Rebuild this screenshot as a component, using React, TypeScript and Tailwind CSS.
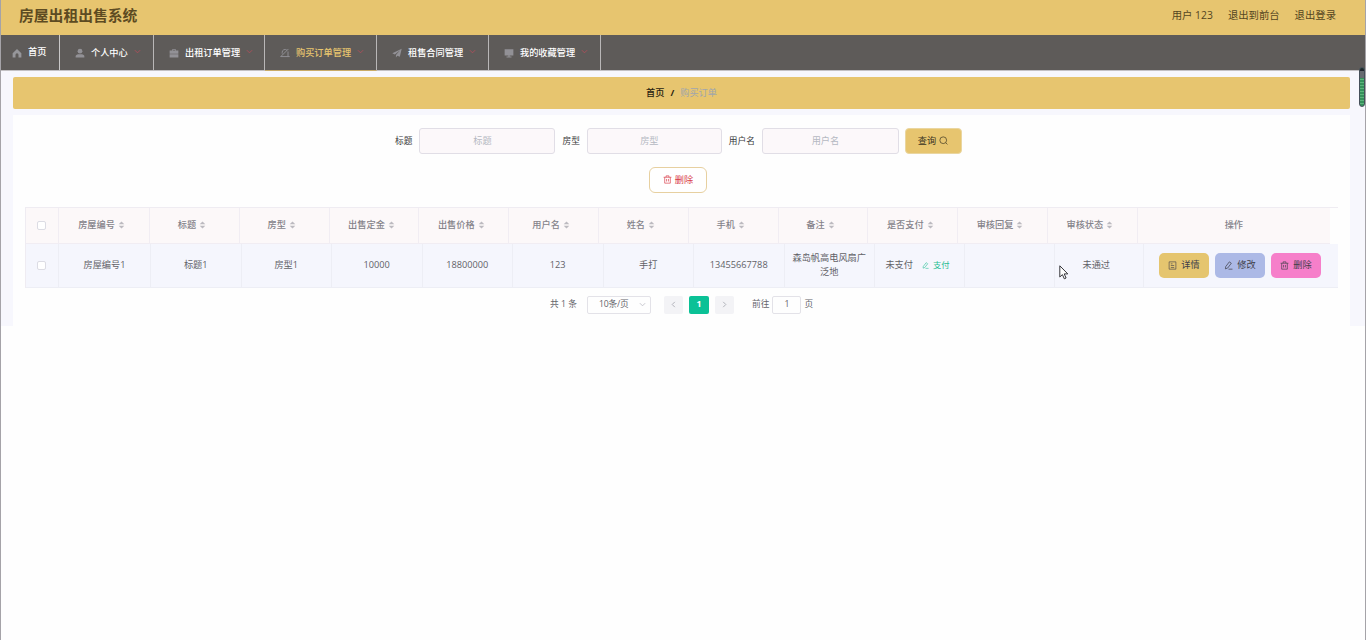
import type { ReactNode } from 'react';
import { clsx } from 'clsx';

interface IconProps {
  className?: string;
}

function HomeIcon({ className }: IconProps) {
  return (
    <svg viewBox="0 0 16 16" className={className} fill="currentColor">
      <path d="M8 1.5 1 8.2V15h4.6v-4.2a2.4 2.4 0 0 1 4.8 0V15H15V8.2z" />
    </svg>
  );
}

function UserIcon({ className }: IconProps) {
  return (
    <svg viewBox="0 0 16 16" className={className} fill="currentColor">
      <circle cx="8" cy="5" r="3.8" />
      <path d="M1 15v-1.500C1 11.500 3 10 5 10h6c2 0 4 1.500 4 3.500V15z" />
    </svg>
  );
}

function BriefcaseIcon({ className }: IconProps) {
  return (
    <svg viewBox="0 0 16 16" className={className} fill="currentColor">
      <path d="M5 4V2h6v2h4v5H1V4zm1.200 0h3.600V3.100H6.200zM1 10h14v5H1z" />
    </svg>
  );
}

function EditIcon({ className }: IconProps) {
  return (
    <svg viewBox="0 0 16 16" className={className} fill="none" stroke="currentColor" strokeWidth="1.3" strokeLinejoin="round">
      <path d="M9.500 1.500 13 4 6.500 12.500 2.500 14 3 10zM8 14.500h7" />
    </svg>
  );
}

function BellOffIcon({ className }: IconProps) {
  return (
    <svg viewBox="0 0 16 16" className={className} fill="none" stroke="currentColor" strokeWidth="1.500">
      <path d="M1 14 13.500 1.500M3.500 9V7A4.500 4.500 0 0 1 11 3.500M12.800 5.500V13.500M1 13.700h14.500" />
    </svg>
  );
}

function SendIcon({ className }: IconProps) {
  return (
    <svg viewBox="0 0 16 16" className={className} fill="currentColor">
      <path d="M15.500 1 .5 8.500 4.500 10.300 13 3.500 6.300 11v4l2.300-2.700 3.900 1.700z" />
    </svg>
  );
}

function MonitorIcon({ className }: IconProps) {
  return (
    <svg viewBox="0 0 16 16" className={className} fill="currentColor">
      <path d="M1 2h14v10H9v1.500h3V15H4v-1.500h3V12H1z" />
    </svg>
  );
}

function TrashIcon({ className }: IconProps) {
  return (
    <svg viewBox="0 0 16 16" className={className} fill="none" stroke="currentColor" strokeWidth="1.2">
      <path d="M1 4h14M5.500 4V1.500h5V4M3 4v10.500h10V4M6.300 7v4.500M9.700 7v4.500" />
    </svg>
  );
}

function DocumentIcon({ className }: IconProps) {
  return (
    <svg viewBox="0 0 16 16" className={className} fill="none" stroke="currentColor" strokeWidth="1.1">
      <path d="M2 1.500h12v13H2zM5 5h3M5 8h6M5 11.500h6" />
    </svg>
  );
}

function SearchIcon({ className }: IconProps) {
  return (
    <svg viewBox="0 0 16 16" className={className} fill="none" stroke="currentColor" strokeWidth="1.2">
      <circle cx="7.500" cy="7.500" r="6" />
      <path d="m12 12 3 3" />
    </svg>
  );
}

function Chevron({ className }: IconProps) {
  return (
    <svg viewBox="0 0 16 16" className={className} fill="none" stroke="currentColor" strokeWidth="2">
      <path d="m2 5 6 6 6-6" />
    </svg>
  );
}

function SortCaret() {
  return (
    <svg viewBox="0 0 8 10" className="ml-[3px] h-[8px] w-[7px] shrink-0 fill-[#bcbac0]">
      <path d="M4 .5 7.500 4h-7zM4 9.500.5 6h7z" />
    </svg>
  );
}

const navItems = [
  { label: '个人中心', icon: UserIcon, width: 'w-[94px]' },
  { label: '出租订单管理', icon: BriefcaseIcon, width: 'w-[111px]' },
  { label: '购买订单管理', icon: BellOffIcon, width: 'w-[112px]', active: true },
  { label: '租售合同管理', icon: SendIcon, width: 'w-[112px]' },
  { label: '我的收藏管理', icon: MonitorIcon, width: 'w-[112px]' },
];

const columns = [
  '房屋编号', '标题', '房型', '出售定金', '出售价格', '用户名',
  '姓名', '手机', '备注', '是否支付', '审核回复', '审核状态',
];

const order: ReactNode[] = [
  '房屋编号1',
  '标题1',
  '房型1',
  '10000',
  '18800000',
  '123',
  '手打',
  '13455667788',
  '森岛帆高电风扇广泛地',
  <span className="mr-[4px] flex items-center gap-[9px] whitespace-nowrap">
    未支付
    <span className="flex items-center gap-[4px] pt-px text-[8.300px] text-[#1fbd92]">
      <EditIcon className="h-[7px] w-[7px]" />
      支付
    </span>
  </span>,
  '',
  <span className="mr-[5px]">未通过</span>,
];

function Header() {
  return (
    <header className="flex h-[35px] items-center justify-between bg-[#e7c56f] pr-[29px] pl-[18px] text-[#5d4b22]">
      <h1 className="pb-[4px] text-[14.800px] font-bold">房屋出租出售系统</h1>
      <div className="flex gap-[15px] pb-[4px] text-[10.350px] text-[#54451f]">
        <span>用户 123</span>
        <span>退出到前台</span>
        <span>退出登录</span>
      </div>
    </header>
  );
}

function NavBar() {
  return (
    <nav className="flex h-[36px] border-b border-[#c3c1c4] bg-[#5e5b59] text-[9.200px] font-medium text-white">
      <a className="flex w-[59px] items-center border-r border-[#c9c8c8] pb-[2px] pl-[11px]">
        <HomeIcon className="mt-[3px] mr-[6px] h-[10px] w-[10px] text-[#96969a]" />
        首页
      </a>
      {navItems.map(({ label, icon: Icon, width, active }) => (
        <a
          key={label}
          className={clsx(
            'flex items-center border-r border-[#b9b7b7] pl-[15px]',
            width,
            active && '-mb-px border-b border-b-[#c9ab68] text-[#e7c56f]',
          )}
        >
          <Icon className="mt-px mr-[6px] h-[10px] w-[10px] shrink-0 text-[#929196]" />
          <span className="shrink-0">{label}</span>
          <Chevron className="mb-[2px] ml-[6px] h-[7px] w-[7px] shrink-0 text-[#b04f5a]" />
        </a>
      ))}
    </nav>
  );
}

function SearchField({ label, width }: { label: string; width: string }) {
  return (
    <label className="flex items-center gap-[7px]">
      <span className="pt-px text-[8.700px] text-[#38383a]">{label}</span>
      <input
        placeholder={label}
        className={clsx(
          'h-[26px] rounded-[3px] border border-[#e1dee6] bg-[#fcf8fa] pr-[12px] pb-[2px] pl-[2px] text-center text-[9.200px] placeholder:text-[#b5b8c2]',
          width,
        )}
      />
    </label>
  );
}

function ActionButton({ children, className }: { children: ReactNode; className: string }) {
  return (
    <button className={clsx('flex h-[25px] w-[50px] items-center justify-center gap-[4px] rounded-[5px] pb-px text-[#41404a]', className)}>
      {children}
    </button>
  );
}

function Checkbox({ className }: IconProps) {
  return <span className={clsx('h-[9px] w-[9px] rounded-[2px] border border-[#dcdce4] bg-white', className)} />;
}

function OrderTable() {
  return (
    <div className="mr-[12px] ml-[12px] border-t border-l border-[#efecf2] text-[9.200px]">
      <div className="mr-[8px] grid h-[36px] grid-cols-[33px_91px_repeat(11,89.800px)_1fr] bg-[#fcf8f9] text-[#85838a]">
        <div className="flex items-center justify-center border-r border-b border-[#f1edf3]">
          <Checkbox className="mr-px" />
        </div>
        {columns.map((name) => (
          <div key={name} className="flex items-center justify-center border-r border-b border-[#f1edf3] pr-[5px] pb-[2px] font-medium">
            {name}
            <SortCaret />
          </div>
        ))}
        <div className="flex items-center justify-center border-b border-[#f1edf3] pb-px font-medium">操作</div>
      </div>
      <div className="grid h-[44px] grid-cols-[33px_92px_repeat(8,90.500px)_90px_89.500px_89.500px_1fr] bg-[#f5f6fd] text-[#626268]">
        <div className="flex items-center justify-center border-r border-b border-[#edeef5]">
          <Checkbox className="mr-[2px]" />
        </div>
        {order.map((value, i) => (
          <div
            key={columns[i]}
            className="flex items-center justify-center border-r border-b border-[#edeef5] px-[8px] pb-[2px] text-center leading-[14px] whitespace-normal"
          >
            {value}
          </div>
        ))}
        <div className="flex items-center justify-center gap-[6px] border-b border-[#edeef5] pr-[2px]">
          <ActionButton className="bg-[#e5c56f]">
            <DocumentIcon className="h-[9px] w-[9px]" />
            详情
          </ActionButton>
          <ActionButton className="bg-[#acb9e6]">
            <EditIcon className="h-[9px] w-[9px]" />
            修改
          </ActionButton>
          <ActionButton className="bg-[#f67fca]">
            <TrashIcon className="h-[9px] w-[9px]" />
            删除
          </ActionButton>
        </div>
      </div>
    </div>
  );
}

function Pagination() {
  return (
    <div className="flex h-[19px] items-center pl-[537px] text-[8.700px] text-[#65656b]">
      <span className="w-[37px]">共 1 条</span>
      <div className="flex h-[18px] w-[64px] items-center justify-between rounded-[2px] border border-[#e3e2e8] pr-[4px] pl-[11px] tracking-[-0.2px]">
        10条/页
        <Chevron className="h-[7px] w-[7px] text-[#c0c0c8]" />
      </div>
      <div className="ml-[13px] flex gap-[6px]">
        <button className="flex h-[18px] w-[19px] items-center justify-center rounded-[2px] bg-[#f3f3f6]">
          <Chevron className="h-[7px] w-[7px] rotate-90 text-[#a9aab2]" />
        </button>
        <button className="h-[18px] w-[20px] rounded-[2px] bg-[#0bc196] font-bold text-white">1</button>
        <button className="flex h-[18px] w-[19px] items-center justify-center rounded-[2px] bg-[#f3f3f6]">
          <Chevron className="h-[7px] w-[7px] -rotate-90 text-[#a9aab2]" />
        </button>
      </div>
      <span className="ml-[18px]">前往</span>
      <span className="mx-[3px] flex h-[18px] w-[29px] items-center justify-center rounded-[2px] border border-[#e3e2e8]">1</span>
      <span>页</span>
    </div>
  );
}

export default function App() {
  return (
    <div className="relative h-[640px] w-[1366px] overflow-hidden border-r border-l border-[#a5a3a8] bg-[#fefefe] font-['Open_Sans','Noto_Sans_CJK_SC',sans-serif] whitespace-nowrap">
      <Header />
      <NavBar />
      <main className="h-[255px] bg-[#f7f7fd] pt-[6px] pr-[15px] pl-[12px]">
        <div className="flex h-[32px] items-center justify-center gap-[6px] rounded-[2px] bg-[#e7c56f] pb-px text-[9.200px]">
          <span className="font-medium text-[#28220f]">首页</span>
          <span className="font-bold text-[#28220f]">/</span>
          <span className="text-[#a0a6ae]">购买订单</span>
        </div>
        <section className="mt-[6px] h-[211px] bg-[#fefefe] pt-[13px]">
          <div className="flex justify-center gap-[7px] pr-[6px]">
            <SearchField label="标题" width="w-[136px]" />
            <SearchField label="房型" width="w-[135px]" />
            <SearchField label="用户名" width="w-[137px]" />
            <button className="-ml-px flex h-[26px] w-[57px] items-center justify-center gap-[3px] rounded-[4px] border border-[#ead6a0] bg-[#e7c56f] pr-px pb-px text-[9.200px] text-[#38321f]">
              查询
              <SearchIcon className="h-[9px] w-[9px]" />
            </button>
          </div>
          <div className="mt-[13px] mb-[14px] flex justify-center pr-[7px]">
            <button className="flex h-[26px] w-[58px] items-center justify-center gap-[3px] rounded-[6px] border border-[#e7d0a0] bg-white pb-px text-[9.200px] text-[#d83c48]">
              <TrashIcon className="h-[9px] w-[9px]" />
              删除
            </button>
          </div>
          <OrderTable />
          <div className="mt-[7px]">
            <Pagination />
          </div>
        </section>
      </main>
      <div className="absolute top-[67px] right-0 h-[40px] w-[6px] rounded-[3px] border border-[#46505a] bg-[repeating-linear-gradient(#35915b_0_2px,#5cb47c_2px_3px)]">
        <div className="h-[10px] rounded-t-[2px] border-t-3 border-[#20252d] bg-[#666b70]" />
      </div>
      <svg viewBox="0 0 10 15" className="absolute top-[265px] left-[1058px] h-[15px] w-[10px]" fill="white" stroke="#35353a" strokeWidth="1">
        <path d="M.8.800v11.200l2.600-2.400 1.900 4.200 1.800-.8-1.900-4.100h3.600z" />
      </svg>
    </div>
  );
}
